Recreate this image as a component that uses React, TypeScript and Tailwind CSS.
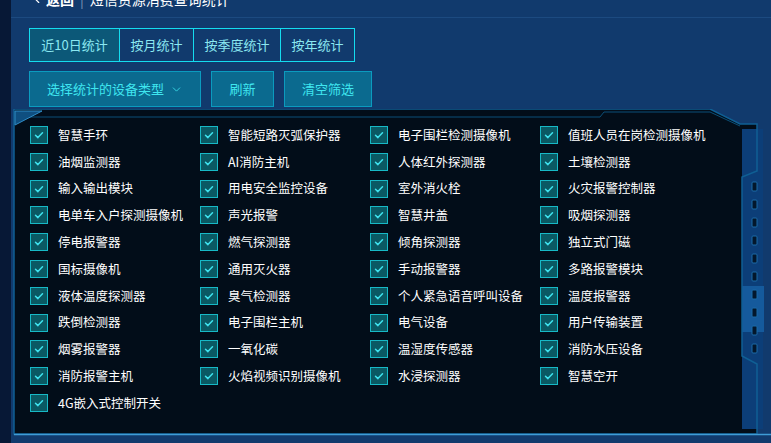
import React from 'react'
import { ChevronDown, ChevronLeft } from 'lucide-react'

const devices = [
  '智慧手环', '智能短路灭弧保护器', '电子围栏检测摄像机', '值班人员在岗检测摄像机',
  '油烟监测器', 'AI消防主机', '人体红外探测器', '土壤检测器',
  '输入输出模块', '用电安全监控设备', '室外消火栓', '火灾报警控制器',
  '电单车入户探测摄像机', '声光报警', '智慧井盖', '吸烟探测器',
  '停电报警器', '燃气探测器', '倾角探测器', '独立式门磁',
  '国标摄像机', '通用灭火器', '手动报警器', '多路报警模块',
  '液体温度探测器', '臭气检测器', '个人紧急语音呼叫设备', '温度报警器',
  '跌倒检测器', '电子围栏主机', '电气设备', '用户传输装置',
  '烟雾报警器', '一氧化碳', '温湿度传感器', '消防水压设备',
  '消防报警主机', '火焰视频识别摄像机', '水浸探测器', '智慧空开',
  '4G嵌入式控制开关',
]

const tabs = [
  { label: '近10日统计', w: 'w-[89px]', active: true },
  { label: '按月统计', w: 'w-[74px]', active: false },
  { label: '按季度统计', w: 'w-[87px]', active: false },
  { label: '按年统计', w: 'w-[74px]', active: false },
]

const CheckBox = () => (
  <span className="flex h-[18px] w-[18px] shrink-0 items-center justify-center border border-[#17b9c6] bg-[#0a5963]">
    <svg width="12" height="12" viewBox="0 0 12 12" fill="none">
      <path d="M2.5 6.2l2.4 2.4 4.6-4.8" stroke="#3fe3ee" strokeWidth="1.5" strokeLinecap="round" strokeLinejoin="round" />
    </svg>
  </span>
)

// frame drawing for the dark panel
const PanelFrame = () => (
  <svg className="absolute inset-0 h-full w-full" viewBox="0 0 759 327" preserveAspectRatio="none">
    <defs>
      <linearGradient id="topGlow" x1="0" x2="1" y1="0" y2="0">
        <stop offset="0" stopColor="#1a80b8" />
        <stop offset="0.15" stopColor="#bfe8ff" />
        <stop offset="0.3" stopColor="#1a8cc4" />
        <stop offset="1" stopColor="#0e8cc4" />
      </linearGradient>
      <linearGradient id="leftGlow" x1="0" x2="0" y1="0" y2="1">
        <stop offset="0" stopColor="#1a5f96" />
        <stop offset="0.42" stopColor="#2a7ab8" />
        <stop offset="0.48" stopColor="#d8f0ff" />
        <stop offset="0.54" stopColor="#2a7ab8" />
        <stop offset="1" stopColor="#1a5f96" />
      </linearGradient>
    </defs>
    <path d="M2 0 H698 L728 15 H745 V62 L730 68 V247 L745 255 V325 H2 Z" fill="#020d19" />
    <rect x="730" y="20" width="21" height="300" fill="#0c3e78" />
    <rect x="730" y="177" width="22" height="46" fill="#155a9c" />
    {Array.from({ length: 10 }).map((_, i) => (
      <rect key={i} x="740" y={73 + i * 18} width="5" height="9" rx="1" fill="#03172c" stroke="#1a6aa8" strokeWidth="1" />
    ))}
    <path d="M2 0 H698 L728 15 H745 V62 L730 68 V247 L745 255 V325 H2 Z" fill="none" stroke="#0f5f94" strokeWidth="1.5" />
    <path d="M18 2.5 H588" stroke="url(#topGlow)" strokeWidth="1.5" />
    <path d="M4 8 H588 L592 3 H698 L728 17" fill="none" stroke="#0a4f78" strokeWidth="1" />
    <path d="M3.5 4 V325" stroke="url(#leftGlow)" strokeWidth="2" />
    <path d="M3 2 H30 L3 16 Z" fill="#0f4f80" stroke="#2f8cc6" strokeWidth="1" />
    <path d="M2 325.5 H759" stroke="#3f9cd6" strokeWidth="1.5" />
  </svg>
)

export default function App() {
  return (
    <div className="flex h-[443px] overflow-hidden bg-[#113a6d] font-['Noto_Sans_CJK_SC','Noto_Sans',sans-serif]">
      <div className="w-[11px] shrink-0 bg-[#071836]" />
      <div className="flex flex-1 flex-col">
        {/* HEADER (scrolled, only lower half shows) */}
        <div className="h-[18px] overflow-hidden border-b border-[#1c4a80] pl-[19px]">
          <div className="-mt-[9px] flex h-[16px] items-center text-[14px] leading-none text-white">
            <ChevronLeft size={14} className="text-white" />
            <span className="ml-[2px] font-bold">返回</span>
            <span className="mx-[6px] text-[#7f96b8]">|</span>
            <span>短信资源消费查询统计</span>
          </div>
        </div>

        <div className="px-[18px]">
          {/* TABS */}
          <div className="mt-[10px] flex h-[34px] w-max border border-[#14dcef]">
            {tabs.map((t, i) => (
              <div
                key={t.label}
                className={`flex items-center justify-center text-[13px] text-[#8be8f1] ${t.w} ${i > 0 ? 'border-l border-[#14dcef]' : ''} ${t.active ? 'bg-[#0c5878]' : ''}`}
              >
                {t.label}
              </div>
            ))}
          </div>

          {/* ACTIONS */}
          <div className="mt-[9px] flex gap-[10px]">
            <button className="flex h-[36px] w-[172px] items-center justify-center gap-[6px] border border-[#0b9bbf] bg-[#0b6a8f] text-[13px] text-[#3fe6f0]">
              选择统计的设备类型
              <ChevronDown size={13} strokeWidth={1.5} />
            </button>
            <button className="h-[36px] w-[63px] border border-[#0b9bbf] bg-[#0b6a8f] text-[13px] text-[#3fe6f0]">刷新</button>
            <button className="h-[36px] w-[88px] border border-[#0b9bbf] bg-[#0b6a8f] text-[13px] text-[#3fe6f0]">清空筛选</button>
          </div>
        </div>

        {/* DEVICE PANEL */}
        <div className="relative ml-[1px] mt-[2px] h-[327px]">
          <PanelFrame />
          <div className="relative grid grid-cols-[170px_170px_170px_170px] gap-y-[8.8px] pl-[18px] pt-[17px]">
            {devices.map((d) => (
              <label key={d} className="flex h-[18px] items-center gap-[10px] text-[12.5px] leading-none text-white">
                <CheckBox />
                <span className="whitespace-nowrap">{d}</span>
              </label>
            ))}
          </div>
        </div>
      </div>
    </div>
  )
}
